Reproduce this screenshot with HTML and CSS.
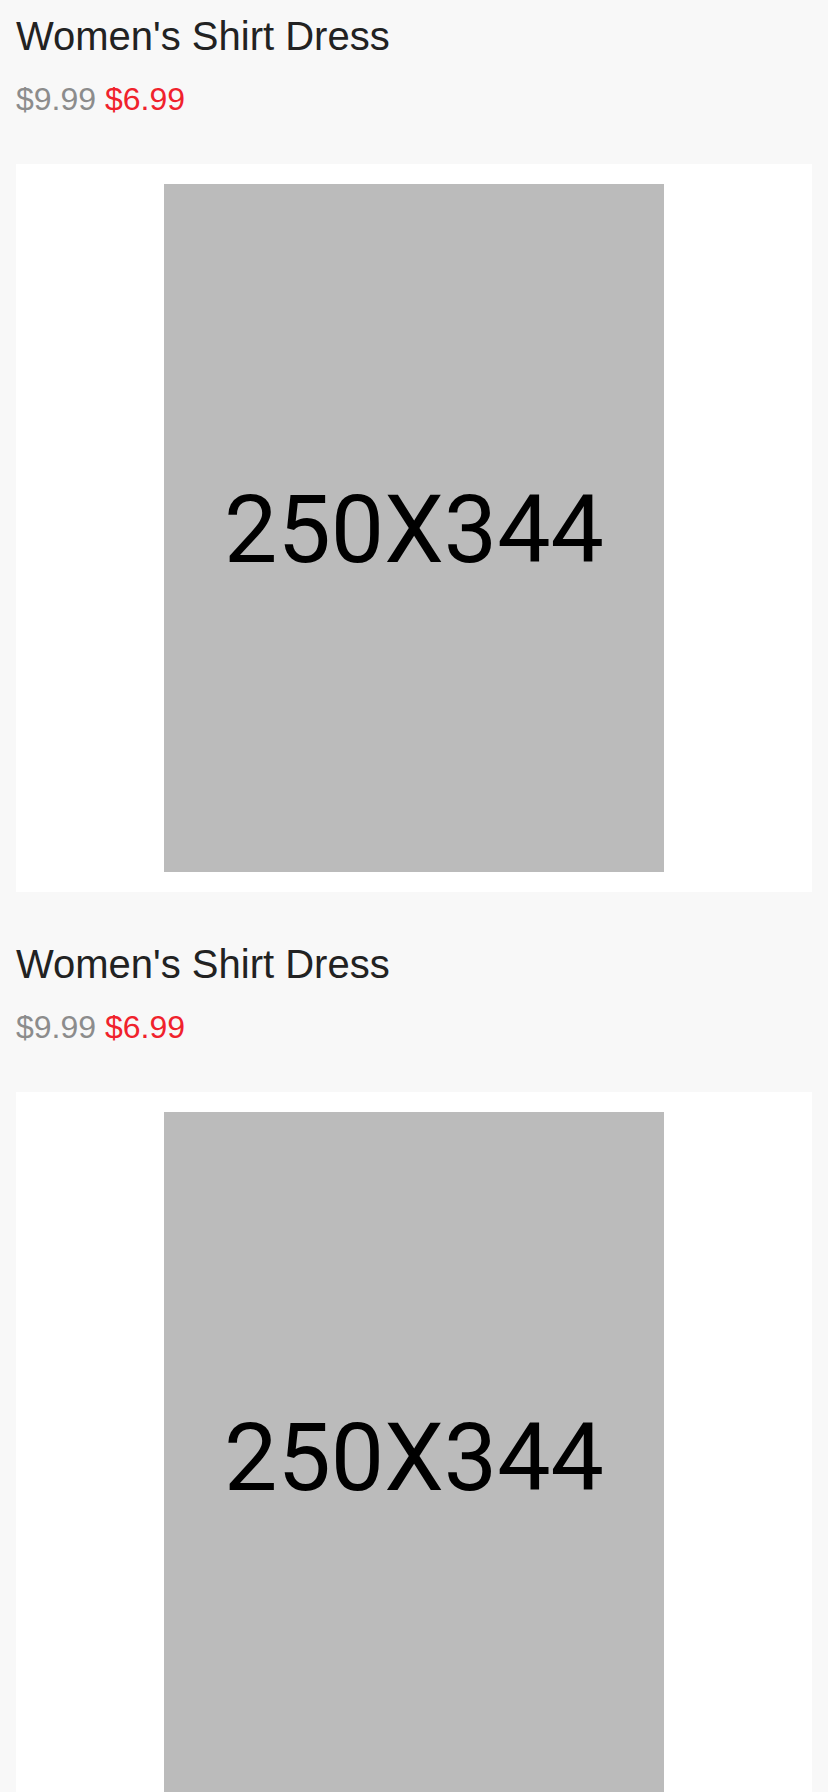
FILE: index.html
```html
<!DOCTYPE html>
<html lang="en">
<head>
<meta charset="utf-8">
<title>Products</title>
<link rel="stylesheet" href="styles.css">
</head>
<body>
<main class="list">
  <article class="product">
    <header class="product-head">
      <h2 class="product-title">Women's Shirt Dress</h2>
      <p class="product-price"><span class="price-old">$9.99</span> <span class="price-new">$6.99</span></p>
    </header>
    <div class="product-card">
      <div class="placeholder">250X344</div>
    </div>
  </article>
  <article class="product">
    <header class="product-head">
      <h2 class="product-title">Women's Shirt Dress</h2>
      <p class="product-price"><span class="price-old">$9.99</span> <span class="price-new">$6.99</span></p>
    </header>
    <div class="product-card">
      <div class="placeholder">250X344</div>
    </div>
  </article>
</main>
</body>
</html>
```
FILE: styles.css
```css
html, body {
  margin: 0;
  padding: 0;
  background: #f8f8f8;
}
body {
  font-family: "Liberation Sans", Arial, sans-serif;
}
.list {
  display: flex;
  flex-direction: column;
  gap: 36px;
}
.product-head {
  padding: 13px 16px 46px;
}
.product-title {
  margin: 0;
  font-size: 40px;
  line-height: 46px;
  font-weight: normal;
  color: #222222;
}
.product-price {
  margin: 22px 0 0;
  font-size: 32px;
  line-height: 37px;
}
.price-old {
  color: #8c8c8c;
}
.price-new {
  color: #f0222c;
}
.product-card {
  margin: 0 16px;
  padding: 20px;
  background: #ffffff;
  display: flex;
  justify-content: center;
}
.placeholder {
  box-sizing: border-box;
  width: 500px;
  height: 688px;
  padding-top: 2px;
  background: #bbbbbb;
  display: flex;
  align-items: center;
  justify-content: center;
  font-family: Roboto, "Liberation Sans", sans-serif;
  font-size: 95px;
  color: #000000;
}
```
